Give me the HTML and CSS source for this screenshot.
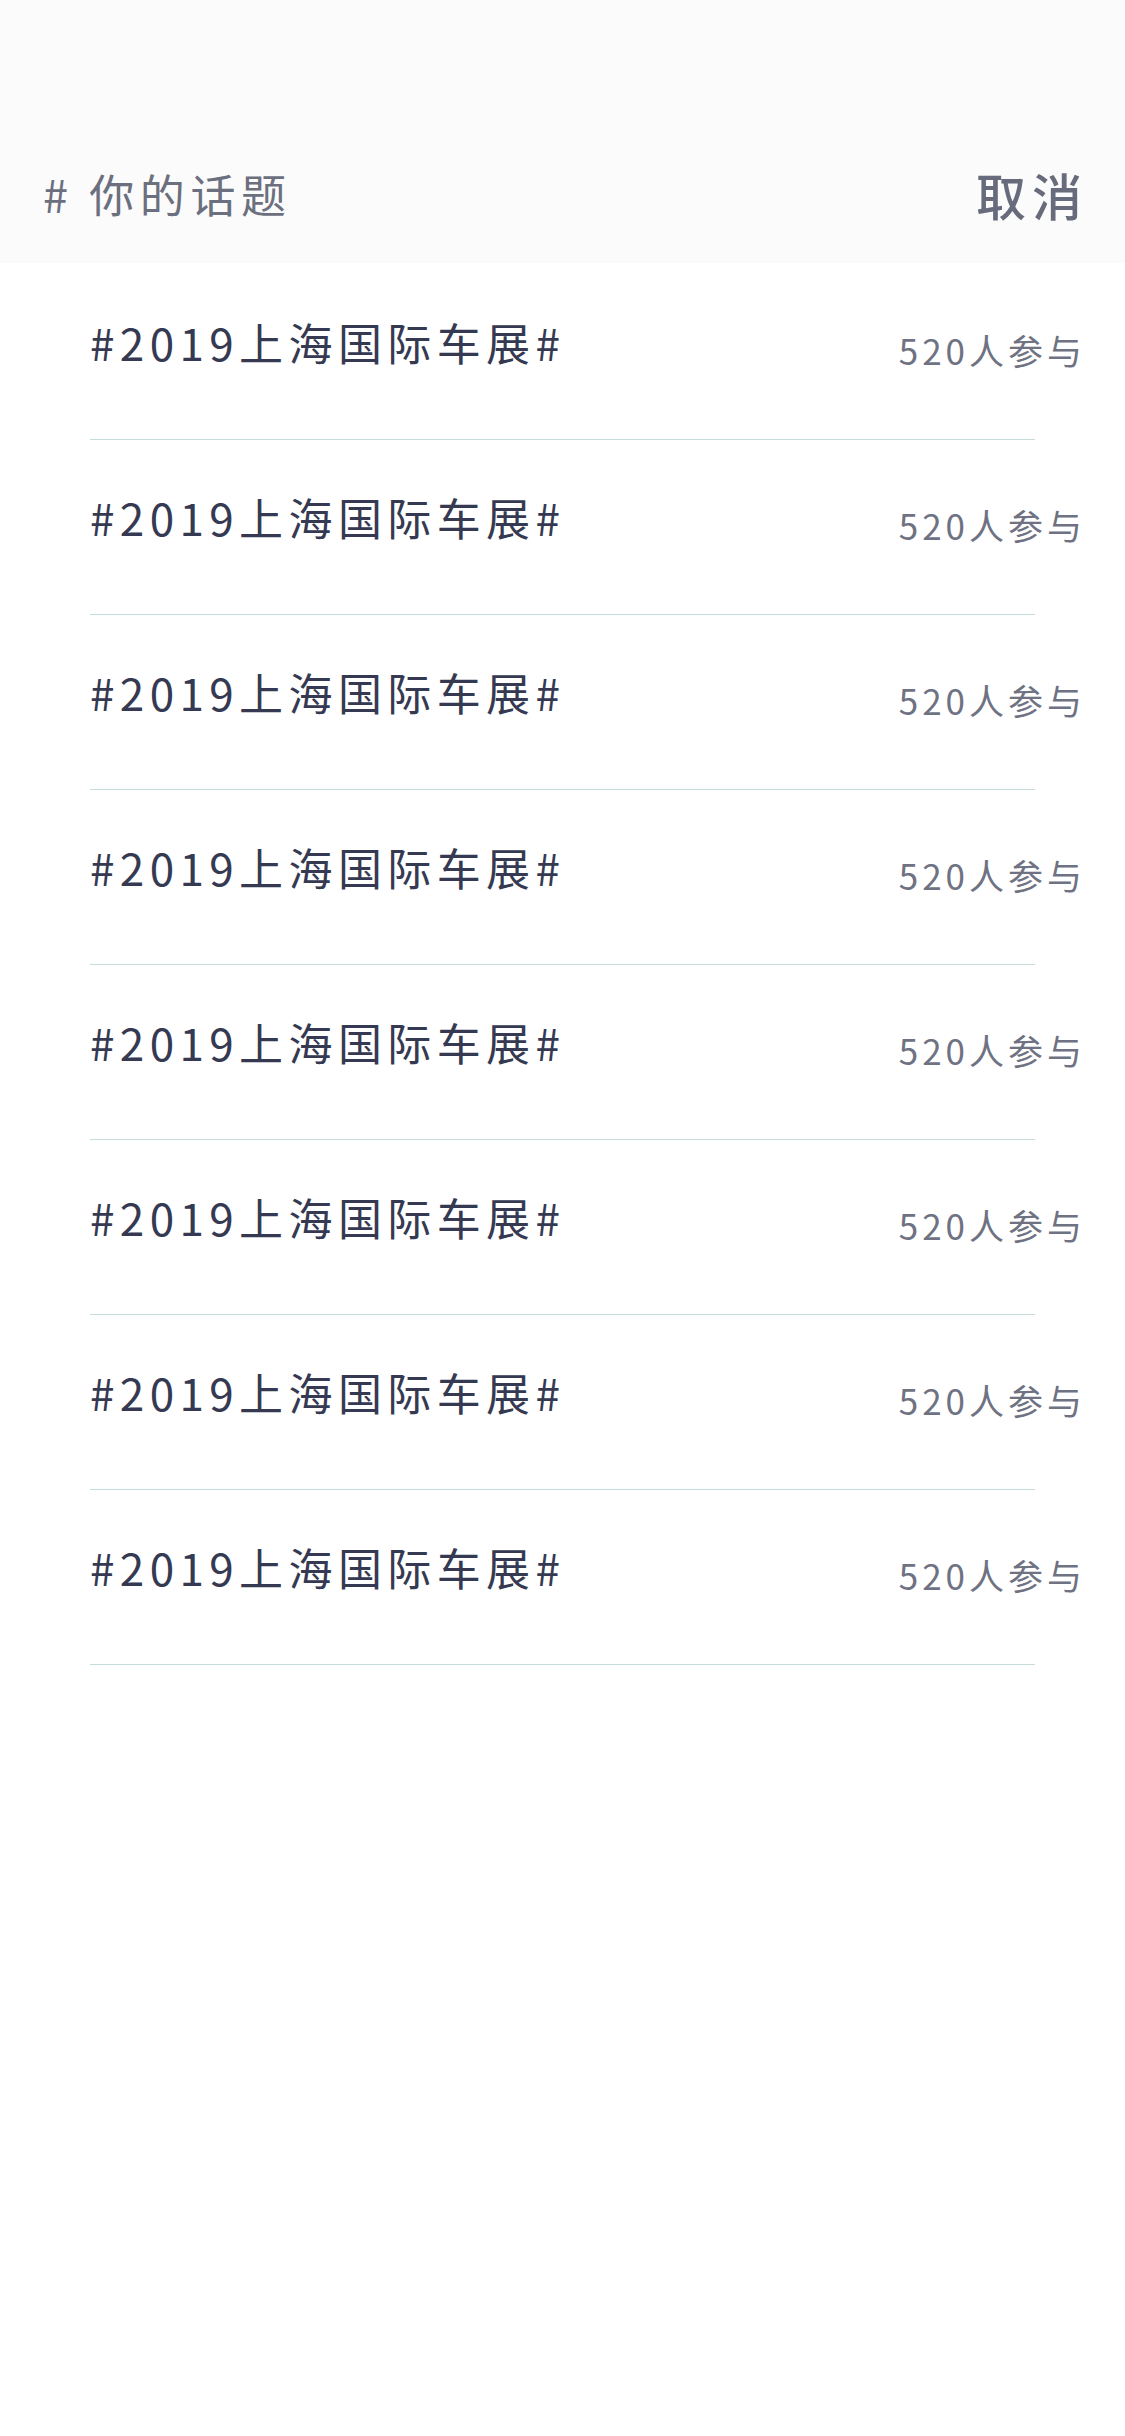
FILE: index.html
```html
<!DOCTYPE html>
<html lang="zh-CN">
<head>
<meta charset="utf-8">
<title>你的话题</title>
<link rel="stylesheet" href="styles.css">
</head>
<body>
<header class="top">
  <div class="top-title"># 你的话题</div>
  <div class="top-cancel">取消</div>
</header>
<ul class="list">
  <li class="row"><span class="topic">#2019上海国际车展#</span><span class="count">520人参与</span></li>
  <li class="row"><span class="topic">#2019上海国际车展#</span><span class="count">520人参与</span></li>
  <li class="row"><span class="topic">#2019上海国际车展#</span><span class="count">520人参与</span></li>
  <li class="row"><span class="topic">#2019上海国际车展#</span><span class="count">520人参与</span></li>
  <li class="row"><span class="topic">#2019上海国际车展#</span><span class="count">520人参与</span></li>
  <li class="row"><span class="topic">#2019上海国际车展#</span><span class="count">520人参与</span></li>
  <li class="row"><span class="topic">#2019上海国际车展#</span><span class="count">520人参与</span></li>
  <li class="row"><span class="topic">#2019上海国际车展#</span><span class="count">520人参与</span></li>
</ul>
</body>
</html>
```
FILE: styles.css
```css
html, body {
  margin: 0;
  padding: 0;
  background: #ffffff;
  font-family: "Noto Sans CJK SC", "Noto Sans", sans-serif;
}

.top {
  box-sizing: border-box;
  height: 263px;
  padding: 124px 37px 0 43px;
  background: #fbfbfb;
  display: flex;
  align-items: center;
  justify-content: space-between;
}

.top-title {
  font-size: 45px;
  letter-spacing: 5.6px;
  color: #6b6f7e;
  line-height: 60px;
}

.top-cancel {
  font-size: 50px;
  font-weight: 500;
  letter-spacing: 6px;
  color: #676b7b;
  line-height: 60px;
}

.list {
  list-style: none;
  margin: 0;
  padding: 2px 0 0 0;
}

.row {
  box-sizing: border-box;
  height: 175px;
  padding: 47px 39px 0 90px;
  display: flex;
  align-items: flex-start;
  justify-content: space-between;
  background-image: linear-gradient(#c6dcdc, #c6dcdc);
  background-repeat: no-repeat;
  background-size: calc(100% - 180px) 1px;
  background-position: 90px 174px;
}

.topic {
  font-size: 44px;
  letter-spacing: 5.4px;
  color: #353a52;
  line-height: 60px;
}

.count {
  margin-top: 8px;
  font-size: 35px;
  letter-spacing: 4px;
  color: #6e7282;
  line-height: 60px;
}
```
